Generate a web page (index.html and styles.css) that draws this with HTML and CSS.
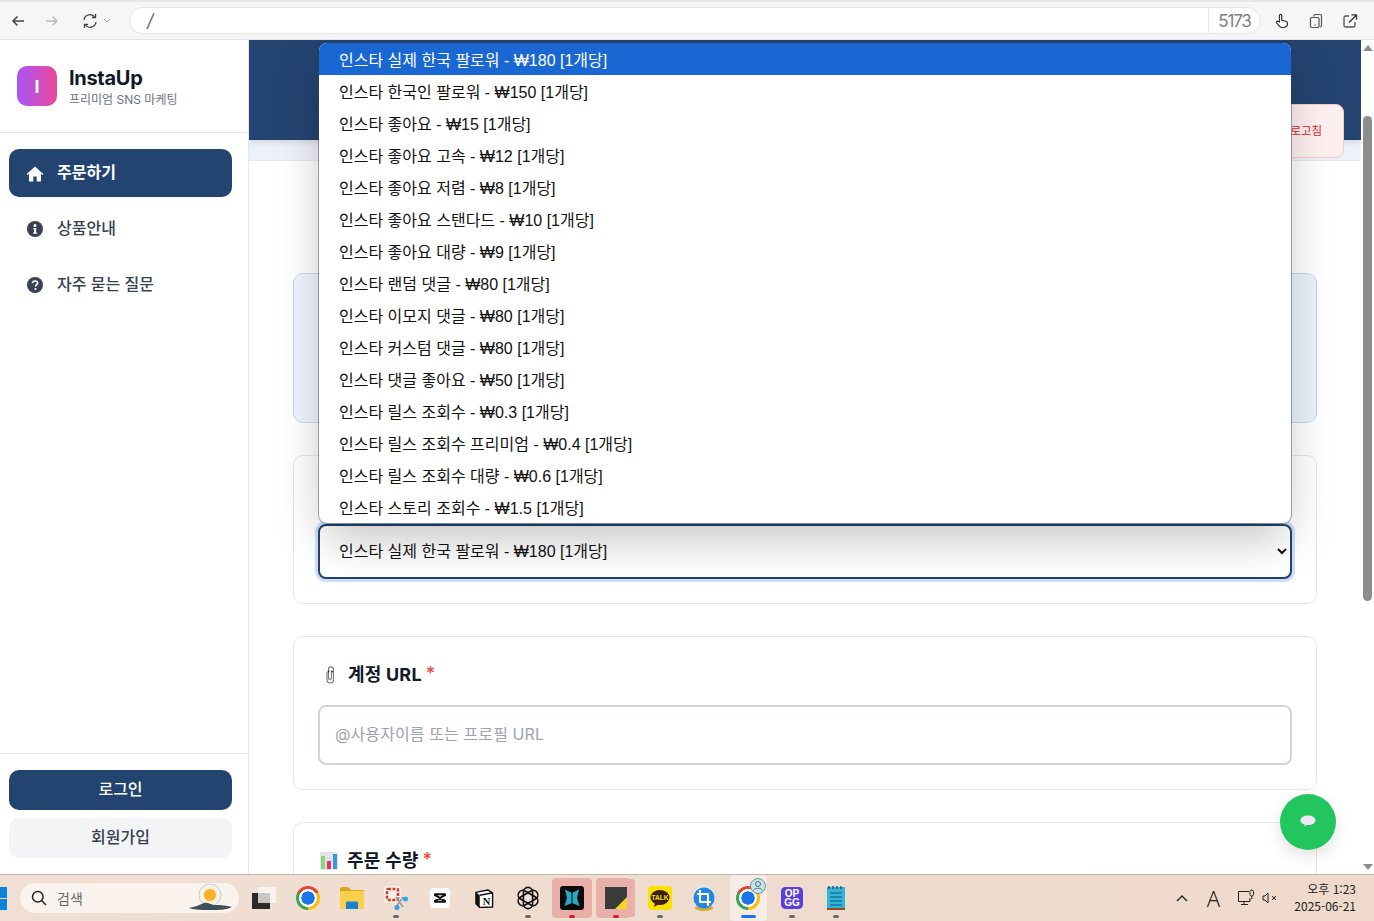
FILE: index.html
```html
<!DOCTYPE html>
<html lang="ko">
<head>
<meta charset="UTF-8">
<meta name="viewport" content="width=device-width, initial-scale=1.0">
<title>InstaUp</title>
<link rel="stylesheet" href="styles.css">
</head>
<body>
<!-- browser toolbar -->
<div class="toolbar">
  <div class="nav-btns">
    <svg class="tb-icon" viewBox="0 0 16 16"><path d="M14 8H3M7.500 3.500 3 8l4.500 4.500" fill="none" stroke="#444" stroke-width="1.500"/></svg>
    <svg class="tb-icon" viewBox="0 0 16 16"><path d="M2 8h11M8.500 3.500 13 8l-4.500 4.500" fill="none" stroke="#bbb" stroke-width="1.500"/></svg>
    <svg class="tb-icon reload" viewBox="0 0 16 16"><path d="M2 7a6 6 0 0 1 11-2.500M14 9a6 6 0 0 1-11 2.500M13.500 1v3.500H10M2.500 15v-3.500H6" fill="none" stroke="#444" stroke-width="1.300"/></svg>
    <svg class="tb-chevron" viewBox="0 0 8 6"><path d="M1 1l3 3 3-3" fill="none" stroke="#999"/></svg>
  </div>
  <div class="address">
    <span class="address-path">/</span>
    <span class="address-port">5173</span>
  </div>
  <div class="tb-right">
    <svg class="tb-icon" viewBox="0 0 16 16"><path d="M5.500 9V2.500a1.100 1.100 0 0 1 2.200 0V7l4 1.200c1.500.5 2 1.500 1.800 3-.3 2-1.500 3.300-4 3.300H8c-1.500 0-2.500-.8-3.500-2.300L2.600 9.800c-.7-1.200.9-2.200 1.800-1.200z" fill="#fff" stroke="#333" stroke-width="1.200"/></svg>
    <svg class="tb-icon" viewBox="0 0 16 16"><path d="M6 3.500V2.800c0-.7.500-1.300 1.300-1.300h5c.8 0 1.200.6 1.200 1.300v10c0 .8-.5 1.200-1.200 1.200H12M3.500 4.500h6.200c.7 0 1.300.5 1.300 1.200v7.500c0 .8-.6 1.300-1.300 1.300H3.800c-.8 0-1.300-.5-1.300-1.300V5.500c0-.6.400-1 1-1z" fill="none" stroke="#555" stroke-width="1.200"/><path d="M7 11.500v1" stroke="#333" stroke-width="1.300"/></svg>
    <svg class="tb-icon" viewBox="0 0 16 16"><path d="M7 3H3.500C2.600 3 2 3.600 2 4.500v8c0 .9.600 1.500 1.500 1.500h8c.9 0 1.500-.6 1.500-1.500V9" fill="none" stroke="#555" stroke-width="1.300"/><path d="M7 9.500 14 2.500M9.500 1.800h5v5" fill="none" stroke="#333" stroke-width="1.300"/></svg>
  </div>
</div>

<div class="page">
  <aside class="sidebar">
    <div class="brand">
      <div class="brand-logo">I</div>
      <div>
        <div class="brand-name">InstaUp</div>
        <div class="brand-sub">프리미엄 SNS 마케팅</div>
      </div>
    </div>
    <nav class="side-nav">
      <a class="nav-item active">
        <svg class="nav-icon home" viewBox="0 0 18 18"><path d="M9 1.500.7 9l.9 1L3 8.800V16.500h4.300v-5h3.400v5H15V8.800l1.400 1.200.9-1z" fill="currentColor"/></svg>
        주문하기
      </a>
      <a class="nav-item">
        <svg class="nav-icon" viewBox="0 0 16 16"><circle cx="8" cy="8" r="8" fill="currentColor"/><circle cx="8" cy="4.400" r="1.500" fill="#fff"/><path d="M6.300 7h2.900v4.400h1v1.300H6.100v-1.300h1V8.300h-.8z" fill="#fff"/></svg>
        상품안내
      </a>
      <a class="nav-item">
        <svg class="nav-icon" viewBox="0 0 16 16"><circle cx="8" cy="8" r="8" fill="currentColor"/><path d="M5.500 6.200C5.600 4.800 6.700 4 8.100 4c1.500 0 2.500.9 2.500 2.100 0 1.800-2 1.800-2 3.300" fill="none" stroke="#fff" stroke-width="1.700"/><circle cx="8.500" cy="12" r="1.100" fill="#fff"/></svg>
        자주 묻는 질문
      </a>
    </nav>
    <div class="side-bottom">
      <button class="btn-login">로그인</button>
      <button class="btn-signup">회원가입</button>
    </div>
  </aside>

  <main class="main">
    <header class="main-header">
      <button class="btn-refresh">새로고침</button>
    </header>
    <div class="header-strip"></div>
    <div class="content">
      <section class="card card-info"></section>

      <section class="card">
        <!-- label sits under the open list -->
        <div class="field-label"></div>
        <select class="service-select">
          <option>인스타 실제 한국 팔로워 - ₩180 [1개당]</option>
        </select>
      </section>

      <section class="card">
        <div class="field-label">
          <svg class="label-icon" viewBox="0 0 14 20"><path d="M4 7v8c0 4 6.500 4 6.500 0V4.500C10.500 1 5.500 1 5.500 4.500V13c0 1.800 3 1.800 3 0V6" fill="none" stroke="#777" stroke-width="1.100"/><circle cx="5.500" cy="6.500" r="1" fill="#333"/><circle cx="9" cy="6.500" r="1" fill="#333"/></svg>
          계정 URL <span class="req">*</span>
        </div>
        <input class="text-input" type="text" placeholder="@사용자이름 또는 프로필 URL">
      </section>

      <section class="card">
        <div class="field-label">
          <svg class="label-icon wide" viewBox="0 0 18 18"><rect width="18" height="18" rx="2" fill="#dfe3ea"/><rect x="1" y="4" width="4" height="13" fill="#8fd86f"/><rect x="7" y="9" width="4" height="8" fill="#e8306f"/><rect x="13" y="2" width="4" height="15" fill="#3b95e0"/></svg>
          주문 수량 <span class="req">*</span>
        </div>
      </section>
    </div>

    <!-- open select list -->
    <ul class="select-popup">
      <li class="selected">인스타 실제 한국 팔로워 - ₩180 [1개당]</li>
      <li>인스타 한국인 팔로워 - ₩150 [1개당]</li>
      <li>인스타 좋아요 - ₩15 [1개당]</li>
      <li>인스타 좋아요 고속 - ₩12 [1개당]</li>
      <li>인스타 좋아요 저렴 - ₩8 [1개당]</li>
      <li>인스타 좋아요 스탠다드 - ₩10 [1개당]</li>
      <li>인스타 좋아요 대량 - ₩9 [1개당]</li>
      <li>인스타 랜덤 댓글 - ₩80 [1개당]</li>
      <li>인스타 이모지 댓글 - ₩80 [1개당]</li>
      <li>인스타 커스텀 댓글 - ₩80 [1개당]</li>
      <li>인스타 댓글 좋아요 - ₩50 [1개당]</li>
      <li>인스타 릴스 조회수 - ₩0.3 [1개당]</li>
      <li>인스타 릴스 조회수 프리미엄 - ₩0.4 [1개당]</li>
      <li>인스타 릴스 조회수 대량 - ₩0.6 [1개당]</li>
      <li>인스타 스토리 조회수 - ₩1.5 [1개당]</li>
    </ul>

    <button class="chat-fab">
      <svg viewBox="0 0 16 12" width="16" height="12"><path d="M8 .5c4.200 0 7.500 1.700 7.500 4.700S12.200 10 8 10c-.6 0-1.200 0-1.700-.1L4.500 11.500l.1-2C2 8.800.5 7.200.5 5.200.5 2.200 3.800.5 8 .5z" fill="#efe6f5"/></svg>
    </button>
  </main>

  <div class="scrollbar">
    <span class="arrow-up"></span>
    <div class="thumb"></div>
    <span class="arrow-down"></span>
  </div>
</div>

<!-- windows taskbar -->
<footer class="taskbar">
  <svg class="win-logo" viewBox="0 0 7 23"><rect y="0" width="7" height="11" fill="#0a84d8"/><rect y="12" width="7" height="11" fill="#0a84d8"/></svg>
  <div class="search-box">
    <svg viewBox="0 0 16 16" width="16" height="16"><circle cx="6.800" cy="6.800" r="5.300" fill="none" stroke="#222" stroke-width="1.500"/><path d="M10.800 10.800 15 15" stroke="#222" stroke-width="1.500"/></svg>
    <span class="search-text">검색</span>
    <svg class="search-art" viewBox="0 0 44 28" width="44" height="28"><circle cx="21" cy="11" r="11" fill="#fbf0dc" stroke="#b9d5dc"/><circle cx="21" cy="11" r="6" fill="#f6b02c"/><path d="M0 24c6-1 10-3 15-5 4-1 7 2 10 2 5 0 9 0 18 2-6 3-13 3-20 3-8 0-17 0-23-2z" fill="#3d4f57"/></svg>
  </div>
  <div class="task-items">
    <div class="task-item">
      <svg viewBox="0 0 24 22" width="24" height="22"><rect x="6" width="18" height="16" fill="#f6f3f1"/><rect y="6" width="18" height="16" fill="#2a2a2a"/><rect x="6" y="6" width="12" height="10" fill="#c9c6c4"/></svg>
    </div>
    <div class="task-item"><span class="chrome-logo"></span></div>
    <div class="task-item">
      <svg viewBox="0 0 24 22" width="24" height="22"><path d="M0 2c0-1 .6-2 2-2h6l3 3h11c1.200 0 2 .8 2 2v15c0 1.200-.8 2-2 2H2c-1.200 0-2-.8-2-2z" fill="#d9a520"/><rect y="4" width="24" height="18" rx="1.500" fill="#fbcf4b"/><path d="M6 16c0-1 .6-1.500 1.500-1.500h9c.9 0 1.500.5 1.500 1.500v6H6z" fill="#1583cf"/></svg>
    </div>
    <div class="task-item running">
      <svg viewBox="0 0 25 24" width="25" height="24"><rect width="17" height="17" rx="2" fill="#f2efed"/><rect x="3" y="3" width="11" height="11" rx="1" fill="none" stroke="#d5381e" stroke-width="2.500" stroke-dasharray="3 1.500"/><path d="M12 11l7 10M19 11l-7 10" stroke="#9a9a9a" stroke-width="1.500"/><circle cx="21.500" cy="13" r="2.500" fill="#2aa5e8"/><circle cx="13" cy="21.500" r="2.500" fill="#2aa5e8"/></svg>
    </div>
    <div class="task-item">
      <svg viewBox="0 0 20 20" width="20" height="20"><rect width="20" height="20" rx="3.500" fill="#fff"/><path d="M5 6.200h10v1L5 12.800v1h10v-1L5 7.200z" fill="#fff" stroke="#111" stroke-width="2" stroke-linejoin="round"/></svg>
    </div>
    <div class="task-item">
      <svg viewBox="0 0 20 20" width="19" height="19"><path d="M1 3.500 13.500 1 18.500 4v15L5 19.500 1 15.500z" fill="#fff" stroke="#111" stroke-width="1.500" stroke-linejoin="round"/><path d="M1 3.500 5 6.500v13L1 15.500z" fill="#111"/><path d="M5 6.500 18.500 4" stroke="#111" stroke-width="1.500"/><text x="12" y="16.500" class="notion-text">N</text></svg>
    </div>
    <div class="task-item running">
      <svg viewBox="0 0 26 26" width="24" height="24"><g fill="none" stroke="#111" stroke-width="1.700"><rect x="8" y="1.500" width="10" height="23" rx="5"/><rect x="8" y="1.500" width="10" height="23" rx="5" transform="rotate(60 13 13)"/><rect x="8" y="1.500" width="10" height="23" rx="5" transform="rotate(120 13 13)"/></g></svg>
    </div>
    <div class="task-item active running-red">
      <svg viewBox="0 0 24 24" width="24" height="24"><rect width="24" height="24" rx="3" fill="#0a0a0a"/><path d="M12 7 5 3.500 7 12l-2.500 8L12 17l7.500 3L17 12l2-8.500z" fill="#27a9c6"/><path d="M12 4v17" stroke="#0a0a0a"/></svg>
    </div>
    <div class="task-item active stacked running-red">
      <svg viewBox="0 0 22 22" width="22" height="22"><rect width="22" height="22" fill="#3b3b3b"/><path d="M22 10v12H10z" fill="#f9d423"/></svg>
    </div>
    <div class="task-item running">
      <svg viewBox="0 0 24 24" width="24" height="24"><rect width="24" height="24" rx="4" fill="#fae100"/><ellipse cx="12" cy="11.500" rx="9.500" ry="7.500" fill="#3c1e1e"/><path d="M7 17l-1 4 5-3z" fill="#3c1e1e"/><text x="12" y="14" class="talk-text">TALK</text></svg>
    </div>
    <div class="task-item">
      <svg viewBox="0 0 24 26" width="24" height="26"><circle cx="7" cy="4" r="3" fill="#dfe7ee"/><circle cx="17" cy="4" r="3" fill="#dfe7ee"/><ellipse cx="12" cy="23" rx="9" ry="3" fill="#d9a632"/><circle cx="12" cy="13" r="10.500" fill="#1f87e6"/><path d="M8 5v12h11M5 9h11v12" fill="none" stroke="#fff" stroke-width="2"/></svg>
    </div>
    <div class="task-item current">
      <span class="chrome-logo"></span>
      <svg class="profile-badge" viewBox="0 0 16 16"><circle cx="8" cy="8" r="7.500" fill="#cfe0e4" stroke="#5f9aa8"/><circle cx="8" cy="6" r="2.500" fill="none" stroke="#3c7f90"/><path d="M3.500 12.500c1-3 8-3 9 0" fill="none" stroke="#3c7f90"/></svg>
    </div>
    <div class="task-item running">
      <svg viewBox="0 0 22 22" width="22" height="22"><rect width="22" height="22" rx="4.500" fill="#5a3fd6"/><text x="11" y="10" class="opgg-text">OP</text><text x="11" y="19" class="opgg-text">GG</text></svg>
    </div>
    <div class="task-item running">
      <svg viewBox="0 0 18 24" width="18" height="24"><rect y="1" width="18" height="21" fill="#35b3d9"/><rect y="22" width="18" height="2" fill="#9a4a1c"/><path d="M2 0v3M6 0v3M10 0v3M14 0v3" stroke="#1c5d76" stroke-width="1.500"/><path d="M3 7h12M3 11h12M3 15h12M3 19h12" stroke="#13789c" stroke-width="1.500"/></svg>
    </div>
  </div>
  <div class="tray">
    <svg viewBox="0 0 12 8" width="12" height="8"><path d="M1 7l5-5 5 5" fill="none" stroke="#222" stroke-width="1.400"/></svg>
    <span class="tray-a">A</span>
    <svg class="tray-net" viewBox="0 0 18 18" width="18" height="18"><path d="M12 2.500H1.500v10H13V9M4 15.500h7M7 12.500v3" fill="none" stroke="#222"/><rect x="13" y="1" width="3.500" height="6" rx="1.700" fill="none" stroke="#222"/><path d="M14.800 7v3" stroke="#222"/></svg>
    <svg class="tray-vol" viewBox="0 0 16 12" width="16" height="12"><path d="M1 4h2l3-3v10L3 8H1zM10 4l4 4M14 4l-4 4" fill="none" stroke="#222"/></svg>
    <div class="clock">
      <div>오후 1:23</div>
      <div>2025-06-21</div>
    </div>
  </div>
</footer>
</body>
</html>
```

FILE: styles.css
```css
* {
  box-sizing: border-box;
}

html,
body {
  height: 100%;
}

body {
  margin: 0;
  display: flex;
  flex-direction: column;
  height: 921px;
  overflow: hidden;
  font-family: Inter, "Noto Sans CJK KR", sans-serif;
  background-color: #fff;
  color: #111827;
}

/* browser toolbar */
.toolbar {
  height: 40px;
  flex: none;
  display: flex;
  align-items: center;
  background-color: #f6f6f6;
  border-top: 2px solid #e6e6e6;
  border-bottom: 1px solid #e3e3e3;
}

.nav-btns {
  width: 129px;
  flex: none;
  display: flex;
  align-items: center;
  padding-left: 10px;
  gap: 18px;
}

.tb-icon {
  width: 16px;
  height: 16px;
  flex: none;
}

.reload {
  margin-left: 4px;
}

.tb-chevron {
  width: 8px;
  height: 6px;
  margin-left: -13px;
}

.address {
  width: 1132px;
  height: 27px;
  flex: none;
  display: flex;
  align-items: center;
  justify-content: space-between;
  background-color: #fff;
  border: 1px solid #e6e6e6;
  border-radius: 14px;
}

.address-path {
  padding-left: 17px;
  font-size: 18px;
  font-style: italic;
  color: #5b6b80;
}

.address-port {
  width: 52px;
  height: 100%;
  display: flex;
  align-items: center;
  justify-content: center;
  border-left: 1px solid #e6e6e6;
  font-size: 17px;
  letter-spacing: -1.200px;
  color: #7b8088;
}

.tb-right {
  display: flex;
  align-items: center;
  gap: 18px;
  padding-left: 13px;
}

/* page area */
.page {
  flex: 1;
  min-height: 0;
  display: flex;
}

.sidebar {
  width: 249px;
  flex: none;
  display: flex;
  flex-direction: column;
  background-color: #fff;
  border-right: 1px solid #e5e7eb;
}

.brand {
  height: 93px;
  flex: none;
  display: flex;
  align-items: center;
  gap: 12px;
  padding: 0 17px;
  border-bottom: 1px solid #e5e7eb;
}

.brand-logo {
  width: 40px;
  height: 40px;
  display: flex;
  align-items: center;
  justify-content: center;
  border-radius: 10px;
  background: linear-gradient(90deg, #a855f7, #ec4899);
  color: #fff;
  font-weight: 700;
  font-size: 18px;
}

.brand-name {
  font-size: 20px;
  font-weight: 700;
  line-height: 26px;
  letter-spacing: -0.300px;
}

.brand-sub {
  margin-top: 1px;
  font-size: 12px;
  line-height: 16px;
  color: #6b7280;
}

.side-nav {
  display: flex;
  flex-direction: column;
  gap: 8px;
  padding: 16px 16px 16px 9px;
}

.nav-item {
  height: 48px;
  display: flex;
  align-items: center;
  gap: 14px;
  padding-left: 18px;
  padding-bottom: 4px;
  border-radius: 10px;
  font-size: 16px;
  font-weight: 500;
  color: #374151;
}

.nav-item.active {
  background-color: #234370;
  color: #fff;
  font-weight: 700;
}

.nav-icon {
  width: 16px;
  height: 16px;
  flex: none;
  margin-top: 4px;
}

.nav-icon.home {
  width: 18px;
  height: 18px;
  margin-left: -1px;
  margin-right: -1px;
  margin-top: 5px;
}

.side-bottom {
  margin-top: auto;
  display: flex;
  flex-direction: column;
  gap: 8px;
  padding: 16px 16px 16px 9px;
  border-top: 1px solid #e5e7eb;
}

.side-bottom button {
  height: 40px;
  padding-bottom: 5px;
  border: none;
  border-radius: 10px;
  font-family: inherit;
  font-size: 16px;
  font-weight: 500;
}

.btn-login {
  background-color: #234370;
  color: #fff;
}

.btn-signup {
  background-color: #f3f4f6;
  color: #374151;
}

/* main column */
.main {
  position: relative;
  flex: 1;
  min-width: 0;
  overflow: hidden;
  background-color: #fff;
}

.main-header {
  position: relative;
  z-index: 1;
  height: 100px;
  background-color: #234370;
  box-shadow: 0 2px 8px rgba(0, 0, 0, 0.12);
}

.btn-refresh {
  position: absolute;
  top: 64px;
  right: 17px;
  width: 90px;
  height: 54px;
  padding: 0 0 2px 4px;
  background-color: #fef0f0;
  border: 1px solid #fbc9c9;
  border-radius: 8px;
  font-family: inherit;
  font-size: 11.500px;
  color: #dc2626;
}

.header-strip {
  height: 21px;
  background-color: #edf1fa;
  border-bottom: 1px solid #e5e7eb;
}

.content {
  display: flex;
  flex-direction: column;
  gap: 32px;
  padding: 112px 44px 0;
}

.card {
  flex: none;
  padding: 24px;
  background-color: #fff;
  border: 1px solid #e5e7eb;
  border-radius: 10px;
}

.card-info {
  height: 150px;
  background: linear-gradient(90deg, #f0f5fd, #eaf2fc);
  border-color: #c3d7f2;
}

.field-label {
  height: 28px;
  margin-bottom: 16px;
  padding-left: 5px;
  padding-bottom: 4px;
  display: flex;
  align-items: center;
  font-size: 18px;
  font-weight: 700;
  letter-spacing: 0.200px;
}

.req {
  color: #ef4444;
  margin-left: 4px;
  font-weight: 500;
}

.label-icon {
  width: 14px;
  height: 20px;
  margin-top: 4px;
  margin-right: 11px;
}

.label-icon.wide {
  width: 18px;
  height: 18px;
  margin-left: -3px;
  margin-right: 9px;
}

.service-select {
  display: block;
  width: 100%;
  height: 55px;
  padding: 0 15px;
  background-color: #fff;
  border: 2px solid #234370;
  border-radius: 8px;
  box-shadow: 0 0 0 3px #cfe0f5;
  outline: none;
  font-family: "Liberation Sans", "Noto Sans CJK KR", sans-serif;
  font-size: 16px;
  color: #111;
}

.text-input {
  display: block;
  width: 100%;
  height: 60px;
  padding: 0 15px 2px;
  background-color: #fff;
  border: 2px solid #d1d5db;
  border-radius: 8px;
  font-family: inherit;
  font-size: 16px;
  letter-spacing: 0.100px;
}

.text-input::placeholder {
  color: #9ca3af;
}

/* open select list */
.select-popup {
  position: absolute;
  z-index: 2;
  top: 3px;
  left: 70px;
  width: 972px;
  margin: 0;
  padding: 0;
  list-style: none;
  background-color: #fff;
  border-radius: 8px;
  overflow: hidden;
  box-shadow: 0 0 0 1px rgba(60, 64, 80, 0.45), 0 20px 48px -6px rgba(0, 0, 0, 0.25);
  font-family: "Liberation Sans", "Noto Sans CJK KR", sans-serif;
  font-size: 16px;
  color: #111;
}

.select-popup li {
  height: 32px;
  line-height: 32px;
  padding: 2px 0 0 20px;
}

.select-popup li.selected {
  background-color: #1967d2;
  color: #fff;
}

.chat-fab {
  position: absolute;
  z-index: 3;
  right: 25px;
  bottom: 24px;
  width: 56px;
  height: 56px;
  display: flex;
  align-items: center;
  justify-content: center;
  padding: 0 0 2px;
  background-color: #22c55e;
  border: none;
  border-radius: 50%;
  box-shadow: 0 6px 16px rgba(0, 0, 0, 0.12);
}

/* page scrollbar */
.scrollbar {
  width: 13px;
  flex: none;
  display: flex;
  flex-direction: column;
  align-items: center;
  padding-top: 5px;
  background-color: #fff;
}

.arrow-up,
.arrow-down {
  width: 0;
  height: 0;
  border-left: 5px solid transparent;
  border-right: 5px solid transparent;
}

.arrow-up {
  border-bottom: 6px solid #8d8d8d;
}

.arrow-down {
  margin-top: auto;
  margin-bottom: 4px;
  border-top: 6px solid #8d8d8d;
}

.thumb {
  width: 9px;
  height: 485px;
  margin-top: 65px;
  background-color: #8d8d8d;
  border-radius: 5px;
}

/* windows taskbar */
.taskbar {
  height: 47px;
  flex: none;
  display: flex;
  align-items: center;
  background: linear-gradient(90deg, #f1dfd3, #eedccf 50%, #efd9cb);
  border-top: 1px solid #c4b5a9;
}

.win-logo {
  width: 7px;
  height: 23px;
  flex: none;
}

.search-box {
  width: 219px;
  height: 30px;
  flex: none;
  display: flex;
  align-items: center;
  margin-left: 13px;
  padding-left: 11px;
  background-color: #faf3ee;
  border-radius: 15px;
}

.search-text {
  margin-left: 10px;
  padding-bottom: 1px;
  font-size: 14px;
  color: #666;
}

.search-art {
  margin-left: auto;
  margin-right: 6px;
}

.task-items {
  display: flex;
  align-items: center;
  margin-left: 3px;
}

.task-item {
  position: relative;
  width: 44px;
  height: 46px;
  flex: none;
  display: flex;
  align-items: center;
  justify-content: center;
}

.task-item.running::after,
.task-item.running-red::after,
.task-item.current::after {
  content: "";
  position: absolute;
  bottom: 3px;
  left: 19px;
  width: 6px;
  height: 3px;
  border-radius: 2px;
  background-color: #6d6a68;
}

.task-item.active::before {
  content: "";
  position: absolute;
  z-index: 0;
  top: 3px;
  left: 2px;
  right: 2px;
  bottom: 3px;
  border-radius: 4px;
  background-color: #e8b0a8;
}

.task-item.stacked::before {
  right: 8px;
  box-shadow: 6px 0 0 -1px #e8b0a8;
}

.task-item.running-red::after {
  background-color: #d32020;
}

.task-item.current {
  background-color: #f5ece6;
  border-radius: 4px;
  width: 37px;
  margin: 0 3.500px;
}

.task-item.current::after {
  left: 11px;
  width: 15px;
  background-color: #1a73e8;
}

.task-item svg,
.chrome-logo {
  position: relative;
  z-index: 1;
}

.chrome-logo {
  width: 24px;
  height: 24px;
  border-radius: 50%;
  background:
    radial-gradient(circle, #1a73e8 0 38%, #fff 40% 52%, transparent 54%),
    conic-gradient(#ea4335 0 60deg, #fbbc04 60deg 180deg, #34a853 180deg 300deg, #ea4335 300deg);
}

.task-item .profile-badge {
  position: absolute;
  top: 3px;
  right: 1px;
  width: 16px;
  height: 16px;
}

.talk-text {
  font-family: "Liberation Sans", sans-serif;
  font-size: 6.500px;
  font-weight: 700;
  fill: #fae100;
  text-anchor: middle;
}

.opgg-text {
  font-family: "Liberation Sans", sans-serif;
  font-size: 10px;
  font-weight: 700;
  fill: #fff;
  text-anchor: middle;
}

.notion-text {
  font-family: "Liberation Serif", serif;
  font-size: 11px;
  font-weight: 700;
  fill: #111;
  text-anchor: middle;
}

.tray {
  flex: 1;
  display: flex;
  align-items: center;
  justify-content: flex-end;
  padding-right: 18px;
}

.tray-a {
  width: 18px;
  margin-left: 16px;
  margin-right: 1px;
  text-align: center;
  font-family: "Noto Sans", sans-serif;
  font-size: 22px;
  line-height: 26px;
  font-weight: 300;
  color: #222;
}

.tray-net {
  margin-left: 14px;
}

.tray-vol {
  margin-left: 7px;
}

.clock {
  margin-left: 16px;
  padding-bottom: 2px;
  text-align: right;
  font-family: "Noto Sans CJK KR", sans-serif;
  font-size: 12px;
  line-height: 17px;
  color: #222;
}
```
